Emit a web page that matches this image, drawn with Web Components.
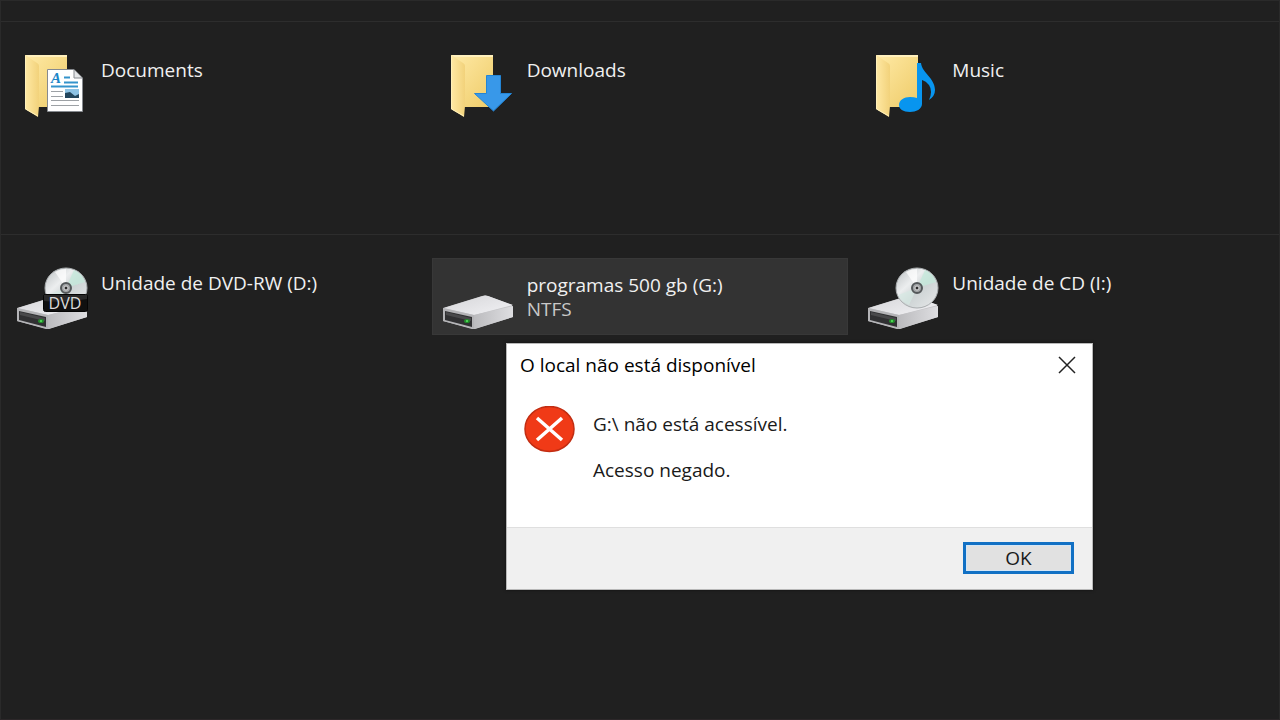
<!DOCTYPE html>
<html lang="pt-BR">
<head>
<meta charset="utf-8">
<meta name="viewport" content="width=device-width, initial-scale=1">
<title>Este Computador</title>
<style>
  html, body { height: 100%; }
  body { margin: 0; background: #202020; font-family: "Open Sans", "Noto Sans", sans-serif; }
</style>
</head>
<body>
<file-explorer>
  <tile-group class="folders">
    <explorer-tile><item-icon slot="icon" kind="documents"></item-icon>Documents</explorer-tile>
    <explorer-tile><item-icon slot="icon" kind="downloads"></item-icon>Downloads</explorer-tile>
    <explorer-tile><item-icon slot="icon" kind="music"></item-icon>Music</explorer-tile>
  </tile-group>
  <tile-group>
    <explorer-tile><item-icon slot="icon" kind="dvd"></item-icon>Unidade de DVD-RW (D:)</explorer-tile>
    <explorer-tile selected><item-icon slot="icon" kind="drive"></item-icon>programas 500 gb (G:)<span slot="detail">NTFS</span></explorer-tile>
    <explorer-tile><item-icon slot="icon" kind="cd"></item-icon>Unidade de CD (I:)</explorer-tile>
  </tile-group>
  <error-dialog slot="dialog">
    <span slot="title">O local não está disponível</span>
    <span slot="message">G:\ não está acessível.</span>
    <span slot="reason">Acesso negado.</span>
  </error-dialog>
</file-explorer>

<script>
class BaseElement extends HTMLElement {
  connectedCallback() {
    if (this.shadowRoot) return;
    this.attachShadow({ mode: 'open' }).innerHTML = this.render();
  }
}

customElements.define('file-explorer', class extends BaseElement {
  render() {
    return `<style>
      :host { display: block; position: relative; box-sizing: border-box; min-height: 100%;
        padding-top: 20px; border: 1px solid #2a2a2a; border-bottom-color: #2c2729; background: #202020; }
    </style>
    <main><slot></slot></main><slot name="dialog"></slot>`;
  }
});

customElements.define('tile-group', class extends BaseElement {
  render() {
    return `<style>
      :host { display: grid; grid-template-columns: repeat(3, minmax(0, 1fr)); gap: 9px;
        padding: 23px 5px; border-top: 1px solid #2d2d2d; }
      :host(.folders) { padding-bottom: 112px; }
    </style><slot></slot>`;
  }
});

customElements.define('explorer-tile', class extends BaseElement {
  render() {
    return `<style>
      :host { display: flex; gap: 11px; box-sizing: border-box; min-height: 77px; padding: 9px 10px 4px;
        font-size: 19px; line-height: 24px; color: #f0f0f0; }
      :host([selected]) { background: #333333; box-shadow: inset 0 0 0 1px #383838; }
      .label { display: flex; flex-direction: column; padding-top: 4px; min-width: 0; }
      :host([selected]) .label { padding-top: 6px; }
      ::slotted([slot=detail]) { color: #c8c8c8; }
    </style>
    <slot name="icon"></slot>
    <div class="label"><div><slot></slot></div><slot name="detail"></slot></div>`;
  }
});

const folder = `
  <linearGradient id="back" x1="0" y1="0" x2="1" y2="1"><stop offset="0" stop-color="#ffeaa6"/><stop offset="1" stop-color="#eecb68"/></linearGradient>
  <linearGradient id="flap" x1="0" y1="0" x2="1" y2="0"><stop offset="0" stop-color="#ffe9a4"/><stop offset="1" stop-color="#f2d27b"/></linearGradient>
  <path d="M9 1H51V53H18Z" fill="url(#back)"/>
  <path d="M9 1H51V3H12Z" fill="#fff0bd"/>
  <path d="M9 1L21 9Q23 10 23 12V52L22 63L9 55Z" fill="url(#flap)"/>
  <path d="M9.500 2V55L22 62" fill="none" stroke="#fff0ba"/>`;

const box = `
  <linearGradient id="top" x1="0" y1="0" x2="1" y2="1"><stop offset="0" stop-color="#d5d5d8"/><stop offset="1" stop-color="#f2f2f5"/></linearGradient>
  <linearGradient id="side" x1="0" y1="0" x2="1" y2="0"><stop offset="0" stop-color="#bbbbbe"/><stop offset="1" stop-color="#dedee1"/></linearGradient>
  <path d="M1 41L40 29Q43 28 46 29L70 38L71 50L33 62L30 62L1 54Z" fill="#c4c4c7"/>
  <path d="M2 41L41 29Q43 28 46 29L71 38L32 48Z" fill="url(#top)"/>
  <path d="M32 48L71 39V50L32 62Z" fill="url(#side)"/>
  <path d="M1 41L32 48V62L1 54Z" fill="#b4b4b7"/>
  <path d="M3 44L30 50V60L3 53Z" fill="#303032"/>
  <path d="M4 45L29 51V54L4 48Z" fill="#49494b"/>
  <ellipse cx="25" cy="54" rx="3" ry="2" fill="#238b2c"/><circle cx="25" cy="54" r="1" fill="#5aea60"/>`;

const disc = `
  <linearGradient id="disc" x1="0" y1="0" x2="1" y2="1"><stop offset="0" stop-color="#b9bec0"/><stop offset=".35" stop-color="#eceeef"/><stop offset=".55" stop-color="#cdd3d4"/><stop offset="1" stop-color="#e8eaeb"/></linearGradient>
  <ellipse cx="50" cy="21" rx="21" ry="20" fill="url(#disc)" stroke="#a9adaf"/>
  <path d="M50 21L58 3A20 19 0 0 1 69 15Z" fill="#c4e9db" opacity=".8"/>
  <path d="M50 21L31 28A20 19 0 0 0 42 38Z" fill="#d5e8e3" opacity=".7"/>
  <path d="M50 21L39 5A20 19 0 0 1 50 2Z" fill="#fff" opacity=".7"/>
  <circle cx="50" cy="21" r="5" fill="#a3a6a8" stroke="#54585a" stroke-width="2"/>
  <circle cx="50" cy="21" r="2" fill="#2b2b2c" stroke="#dedede"/>`;

const icons = {
  documents: folder + `
    <path d="M31.500 15.500H58L66.500 24V57.500H31.500Z" fill="#fff" stroke="#868a8f"/>
    <path d="M58 16V24H66" fill="#e4e6e8" stroke="#868a8f"/>
    <text x="35" y="29" font-family="Liberation Serif" font-size="15" font-style="italic" font-weight="700" fill="#1c86c8">A</text>
    <path d="M48 23.500H54M48 28.500H62M35 32.500H62" stroke="#3493cb" stroke-width="2"/>
    <path d="M35 37.500H47M35 42.500H47M35 46.500H63M35 51.500H63" stroke="#9da1a5"/>
    <path d="M49 35H63V44H49Z" fill="#8dc3e5"/><path d="M49 39L54 38L59 42L63 40V44H49Z" fill="#23465d"/>`,
  downloads: folder + `<path d="M44.500 21.500H58.500V39.500H69.500L51.500 57L32.500 39.500H44.500Z" fill="#3898e9" stroke="#2385d5"/>`,
  music: folder + `<path d="M50 9H54C55 19 68 24 68 36Q68 42 62 46Q66 37 62 31Q59 27 55 26V50C55 55 49 58 43 58C36 58 32 55 32 51C32 46 37 43 43 43Q47 43 50 44Z" fill="#0895ef"/>`,
  drive: box,
  cd: box + disc,
  dvd: box + disc + `
    <rect x="27.500" y="27.500" width="44" height="17" rx="2" fill="#101010" stroke="#050505"/>
    <path d="M28 28H71V32Q50 36 28 34Z" fill="#292929"/>
    <text x="49" y="42" text-anchor="middle" font-family="Open Sans" font-size="16" fill="#dcdcdc">DVD</text>`
};

customElements.define('item-icon', class extends BaseElement {
  render() {
    return `<style>
      :host { display: block; flex: none; width: 74px; height: 64px; }
      svg { display: block; width: 100%; height: 100%; }
    </style>
    <svg viewBox="0 0 74 64" aria-hidden="true">${icons[this.getAttribute('kind')]}</svg>`;
  }
});

customElements.define('error-dialog', class extends BaseElement {
  render() {
    return `<style>
      :host { display: block; position: absolute; left: 505px; top: 342px; width: 587px; max-width: 100%; }
      section { background: #fff; color: #1a1a1a; font-size: 19px; line-height: 24px;
        border: 1px solid #b8b8b8; box-sizing: border-box; box-shadow: 0 0 3px #0008; }
      header { display: flex; justify-content: space-between; align-items: center; height: 42px; padding: 0 15px 0 13px; }
      h1 { margin: 0; font: inherit; color: #000; }
      .close { display: block; width: 20px; height: 20px; padding: 0; border: 0; background: none; }
      .close svg, .mark { display: block; }
      .body { display: flex; align-items: flex-start; gap: 18px; padding: 20px 17px 45px; }
      .mark { flex: none; width: 51px; height: 47px; }
      .text { display: flex; flex-direction: column; gap: 22px; padding-top: 6px; }
      p { margin: 0; }
      footer { display: flex; justify-content: flex-end; padding: 14px 18px 15px; background: #f0f0f0; border-top: 1px solid #dfdfdf; }
      .ok { width: 111px; height: 32px; padding: 0; border: 3px solid #1170c4; background: #e1e1e1;
        color: #1a1a1a; font: inherit; line-height: 24px; box-shadow: inset 0 0 0 1px #d4e6f6; }
    </style>
    <section role="alertdialog" aria-labelledby="title" aria-describedby="text">
      <header>
        <h1 id="title"><slot name="title"></slot></h1>
        <button class="close" type="button" aria-label="Fechar"><svg width="20" height="20" viewBox="0 0 20 20"><path d="M2 2L18 18M18 2L2 18" stroke="#222" stroke-width="1.500"/></svg></button>
      </header>
      <div class="body">
        <svg class="mark" viewBox="0 0 51 47" aria-hidden="true">
          <ellipse cx="25.500" cy="23" rx="24.500" ry="22.500" fill="#f03a17" stroke="#c22d12" stroke-width="1.500"/>
          <path d="M13 12L38 34M38 12L13 34" stroke="#fff" stroke-width="3.500"/>
        </svg>
        <div class="text" id="text"><p><slot name="message"></slot></p><p><slot name="reason"></slot></p></div>
      </div>
      <footer><button class="ok" type="button">OK</button></footer>
    </section>`;
  }
});
</script>
</body>
</html>
